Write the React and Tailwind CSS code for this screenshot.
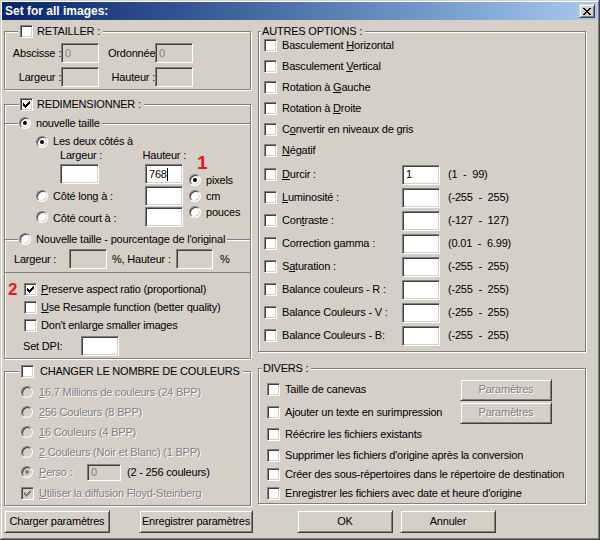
import React from "react";

const SUNKEN =
  "border border-t-[#808080] border-l-[#808080] border-b-white border-r-white shadow-[inset_1px_1px_0_#404040,inset_-1px_-1px_0_#d4d0c8]";
const RAISED =
  "border border-t-[#d4d0c8] border-l-[#d4d0c8] border-b-[#404040] border-r-[#404040] shadow-[inset_1px_1px_0_#fff,inset_-1px_-1px_0_#808080]";
const DIS = "text-[#808080] [text-shadow:1px_1px_0_#fff]";

const CHECK_COLS = [
  [1, 3],
  [2, 4],
  [3, 5],
  [4, 4],
  [5, 3],
  [6, 2],
  [7, 1],
];

function U({ children }) {
  return <u className="underline underline-offset-[1px]">{children}</u>;
}

function Check({ checked = false, disabled = false }) {
  return (
    <span
      className={`relative block w-[13px] h-[13px] shrink-0 ${
        disabled ? "bg-[#d4d0c8]" : "bg-white"
      } ${SUNKEN}`}
    >
      {checked && (
        <svg
          className="absolute left-0 top-0"
          width="11"
          height="11"
          viewBox="0 0 11 11"
          shapeRendering="crispEdges"
        >
          {CHECK_COLS.map(([x, y]) => (
            <rect
              key={x}
              x={x + 1}
              y={y + 1}
              width="1"
              height="3"
              fill={disabled ? "#808080" : "#000"}
            />
          ))}
        </svg>
      )}
    </span>
  );
}

function Radio({ checked = false, disabled = false }) {
  return (
    <span
      className={`relative block w-[12px] h-[12px] rounded-full shrink-0 ${
        disabled ? "bg-[#d4d0c8]" : "bg-white"
      } ${SUNKEN}`}
    >
      {checked && (
        <span
          className={`absolute left-[3px] top-[3px] w-[4px] h-[4px] rounded-full ${
            disabled ? "bg-[#808080]" : "bg-black"
          }`}
        />
      )}
    </span>
  );
}

function Field({ className = "", value = "", disabled = false, caret = false }) {
  return (
    <span
      className={`flex items-center h-[20px] shrink-0 pl-[3px] ${
        disabled ? "bg-[#d4d0c8] text-[#808080]" : "bg-white"
      } ${SUNKEN} ${className}`}
    >
      {value}
      {caret && <span className="w-px h-[13px] bg-black" />}
    </span>
  );
}

function Btn({ className = "", children, disabled = false }) {
  return (
    <span
      className={`flex items-center justify-center h-[23px] shrink-0 bg-[#d4d0c8] ${RAISED} ${
        disabled ? DIS : ""
      } ${className}`}
    >
      {children}
    </span>
  );
}

function Group({ legend, className = "", legendClass = "", children }) {
  return (
    <fieldset
      className={`m-0 p-0 min-w-0 border border-[#808080] shadow-[1px_1px_0_#fff,inset_1px_1px_0_#fff] ${className}`}
    >
      <legend className={`p-0 bg-[#d4d0c8] ${legendClass}`}>
        <span className="flex items-center h-[14px] whitespace-nowrap">{legend}</span>
      </legend>
      {children}
    </fieldset>
  );
}

function SubGroup({ legend, className = "", children }) {
  return (
    <fieldset
      className={`m-0 p-0 min-w-0 border-t border-[#808080] shadow-[inset_0_1px_0_#fff] ${className}`}
    >
      <legend className="p-0 ml-[13px] pl-[1px] pr-[2px] bg-[#d4d0c8]">
        <span className="flex items-center h-[14px] whitespace-nowrap">{legend}</span>
      </legend>
      {children}
    </fieldset>
  );
}

function CloseGlyph() {
  const px = [
    [0, 0], [1, 0], [6, 0], [7, 0],
    [1, 1], [2, 1], [5, 1], [6, 1],
    [2, 2], [3, 2], [4, 2], [5, 2],
    [3, 3], [4, 3],
    [2, 4], [3, 4], [4, 4], [5, 4],
    [1, 5], [2, 5], [5, 5], [6, 5],
    [0, 6], [1, 6], [6, 6], [7, 6],
  ];
  return (
    <svg width="8" height="7" viewBox="0 0 8 7" shapeRendering="crispEdges">
      {px.map(([x, y]) => (
        <rect key={`${x}-${y}`} x={x} y={y} width="1" height="1" fill="#000" />
      ))}
    </svg>
  );
}

function Left() {
  return (
    <div className="w-[247px] shrink-0 flex flex-col">
      {/* RETAILLER */}
      <Group
        className="mt-[4px]"
        legendClass="ml-[13px] pl-[2px] pr-[3px]"
        legend={
          <>
            <Check />
            <span className="ml-[4px]">RETAILLER :</span>
          </>
        }
      >
        <div className="mt-[5px] flex items-center h-[20px]">
          <span className="w-[56px] text-right">Abscisse :</span>
          <Field className="w-[38px]" value="0" disabled />
          <span className="w-[9px]" />
          <span className="w-[47px] overflow-hidden">Ordonnée :</span>
          <Field className="w-[38px]" value="0" disabled />
        </div>
        <div className="mt-[4px] mb-[2px] flex items-center h-[20px]">
          <span className="w-[56px] text-right">Largeur :</span>
          <Field className="w-[38px]" disabled />
          <span className="w-[56px] text-right">Hauteur :</span>
          <Field className="w-[38px]" disabled />
        </div>
      </Group>

      {/* REDIMENSIONNER */}
      <Group
        className="mt-[7px]"
        legendClass="ml-[14px] pl-[1px] pr-[3px]"
        legend={
          <>
            <Check checked />
            <span className="ml-[4px]">REDIMENSIONNER :</span>
          </>
        }
      >
        <SubGroup
          className="mt-[5px]"
          legend={
            <>
              <Radio checked />
              <span className="ml-[5px]">nouvelle taille</span>
            </>
          }
        >
          <div className="mt-[5px] h-[13px] flex items-center pl-[31px]">
            <Radio checked />
            <span className="ml-[5px]">Les deux côtés à</span>
          </div>
          <div className="flex">
            <div className="flex flex-col w-[181px]">
              <div className="h-[14px] flex items-center pl-[55px]">
                <span className="w-[85px]">Largeur :</span>
                <span>Hauteur :</span>
              </div>
              <div className="mt-[2px] h-[20px] flex items-center pl-[55px]">
                <Field className="w-[39px]" />
                <span className="w-[46px]" />
                <Field className="w-[38px]" value="768" caret />
              </div>
              <div className="mt-[2px] h-[20px] flex items-center pl-[31px]">
                <Radio />
                <span className="ml-[5px] w-[92px]">Côté long à :</span>
                <Field className="w-[38px]" />
              </div>
              <div className="mt-[1px] h-[20px] flex items-center pl-[31px]">
                <Radio />
                <span className="ml-[5px] w-[92px] translate-y-[1px]">Côté court à :</span>
                <Field className="w-[38px]" />
              </div>
            </div>
            <div className="flex flex-col">
              <div className="h-[24px] pl-[11px] flex items-end">
                <span className="text-[19px] leading-[19px] font-bold text-[#e8161c] tracking-normal">
                  1
                </span>
              </div>
              <div className="h-[16px] flex items-center pl-[3px]">
                <Radio checked />
                <span className="ml-[5px]">pixels</span>
              </div>
              <div className="h-[16px] flex items-center pl-[3px]">
                <Radio />
                <span className="ml-[5px]">cm</span>
              </div>
              <div className="h-[16px] flex items-center pl-[3px]">
                <Radio />
                <span className="ml-[5px]">pouces</span>
              </div>
            </div>
          </div>
        </SubGroup>

        <SubGroup
          className="mt-[5px] border-b pb-[3px]"
          legend={
            <>
              <Radio />
              <span className="ml-[5px]">Nouvelle taille - pourcentage de l'original</span>
            </>
          }
        >
          <div className="mt-[3px] h-[20px] flex items-center pl-[9px]">
            <span className="w-[55px]">Largeur :</span>
            <Field className="w-[38px]" disabled />
            <span className="ml-[5px] w-[64px]">%, Hauteur :</span>
            <Field className="w-[37px]" disabled />
            <span className="ml-[7px]">%</span>
          </div>
        </SubGroup>

        <div className="mt-[7px] flex flex-col">
          <div className="h-[18px] flex items-center pl-[3px]">
            <span className="w-[16px] text-[17px] leading-[17px] font-bold text-[#e8161c] tracking-normal">
              2
            </span>
            <Check checked />
            <span className="ml-[4px]">
              <U>P</U>reserve aspect ratio (proportional)
            </span>
          </div>
          <div className="h-[18px] flex items-center pl-[19px]">
            <Check />
            <span className="ml-[4px]">
              <U>U</U>se Resample function (better quality)
            </span>
          </div>
          <div className="h-[18px] flex items-center pl-[19px]">
            <Check />
            <span className="ml-[4px]">Don't enlarge smaller images</span>
          </div>
          <div className="mt-[2px] mb-[2px] h-[20px] flex items-center pl-[18px]">
            <span className="w-[58px]">Set DPI:</span>
            <Field className="w-[38px]" />
          </div>
        </div>
      </Group>

      {/* CHANGER */}
      <Group
        className="mt-[5px]"
        legendClass="ml-[14px] pl-[2px] pr-[3px]"
        legend={
          <>
            <Check />
            <span className="ml-[6px]">CHANGER LE NOMBRE DE COULEURS</span>
          </>
        }
      >
        <div className="mt-[4px] mb-[1px] flex flex-col pl-[16px]">
          {[
            [<U key="a">1</U>, "6,7 Millions de couleurs (24 BPP)"],
            [<U key="a">2</U>, "56 Couleurs (8 BPP)"],
            [<U key="a">1</U>, "6 Couleurs (4 BPP)"],
            [<U key="a">2</U>, " Couleurs (Noir et Blanc) (1 BPP)"],
          ].map(([a, b], i) => (
            <div key={i} className="h-[20px] flex items-center">
              <Radio disabled />
              <span className={`ml-[6px] whitespace-pre ${DIS}`}>
                {a}
                {b}
              </span>
            </div>
          ))}
          <div className="h-[20px] flex items-center">
            <Radio checked disabled />
            <span className={`ml-[6px] w-[48px] ${DIS}`}>
              <U>P</U>erso :
            </span>
            <Field className="w-[34px] !h-[17px]" value="0" disabled />
            <span className="ml-[6px]">(2 - 256 couleurs)</span>
          </div>
          <div className="h-[22px] flex items-center">
            <Check checked disabled />
            <span className={`ml-[5px] ${DIS}`}>
              <U>U</U>tiliser la diffusion Floyd-Steinberg
            </span>
          </div>
        </div>
      </Group>
    </div>
  );
}

function Right() {
  const simple = [
    <>Basculement <U>H</U>orizontal</>,
    <>Basculement <U>V</U>ertical</>,
    <>Rotation à <U>G</U>auche</>,
    <>Rotation à <U>D</U>roite</>,
    <>C<U>o</U>nvertir en niveaux de gris</>,
    <><U>N</U>égatif</>,
  ];
  const inputs = [
    [<><U>D</U>urcir :</>, "1", "(1  -  99)"],
    [<><U>L</U>uminosité :</>, "", "(-255  -  255)"],
    [<>Con<U>t</U>raste :</>, "", "(-127  -  127)"],
    ["Correction gamma :", "", "(0.01  -  6.99)"],
    [<>S<U>a</U>turation :</>, "", "(-255  -  255)"],
    ["Balance couleurs - R :", "", "(-255  -  255)"],
    ["Balance Couleurs - V :", "", "(-255  -  255)"],
    ["Balance Couleurs - B:", "", "(-255  -  255)"],
  ];
  const divers = [
    ["Taille de canevas", true, "h-[23px]"],
    ["Ajouter un texte en surimpression", true, "h-[23px]"],
    ["Réécrire les fichiers existants", false, "h-[21px]"],
    ["Supprimer les fichiers d'origine après la conversion", false, "h-[20px]"],
    ["Créer des sous-répertoires dans le répertoire de destination", false, "h-[19px]"],
    ["Enregistrer les fichiers avec date et heure d'origine", false, "h-[19px]"],
  ];
  return (
    <div className="w-[328px] shrink-0 flex flex-col">
      <Group
        className="mt-[4px]"
        legendClass="ml-[2px] pl-[1px] pr-[3px]"
        legend={<span>AUTRES OPTIONS :</span>}
      >
        <div className="mt-[-3px] flex flex-col pl-[5px]">
          {simple.map((l, i) => (
            <div key={i} className="h-[21px] flex items-center">
              <Check />
              <span className="ml-[5px]">{l}</span>
            </div>
          ))}
          <div className="h-[2px]" />
          {inputs.map(([l, v, r], i) => (
            <div key={i} className="h-[23px] flex items-center">
              <Check />
              <span className="ml-[5px] w-[120px]">{l}</span>
              <Field className="w-[38px]" value={v} />
              <span className="ml-[8px] whitespace-pre">{r}</span>
            </div>
          ))}
          <div className="h-[4px]" />
        </div>
      </Group>

      <Group
        className="mt-[9px]"
        legendClass="ml-[3px] pl-[1px] pr-[3px]"
        legend={<span>DIVERS :</span>}
      >
        <div className="mt-[3px] flex flex-col pl-[8px]">
          {divers.map(([l, btn, h], i) => (
            <div key={i} className={`${h} flex items-center`}>
              <Check />
              <span className="ml-[5px] flex-1">{l}</span>
              {btn && (
                <Btn className="w-[92px] !h-[22px] mr-[33px]" disabled>
                  Paramètres
                </Btn>
              )}
            </div>
          ))}
        </div>
      </Group>
    </div>
  );
}

export default function App() {
  return (
    <div className="w-[600px] h-[540px] overflow-hidden whitespace-nowrap bg-[#d4d0c8] p-[2px] shadow-[inset_-1px_-1px_0_#404040,inset_1px_1px_0_#d4d0c8,inset_-2px_-2px_0_#808080,inset_2px_2px_0_#fff] font-['Liberation_Sans',Arial,sans-serif] text-[11px] leading-[13px] tracking-[-0.2px] text-black">
      <div className="h-[18px] flex items-center justify-between pl-[3px] pr-[3px] bg-linear-to-r from-[#0a246a] to-[#a6caf0]">
        <span className="text-white font-bold text-[12px] tracking-normal">Set for all images:</span>
        <span className={`flex items-center justify-center w-[16px] h-[14px] bg-[#d4d0c8] ${RAISED}`}>
          <CloseGlyph />
        </span>
      </div>
      <div className="h-[486px] flex px-[2px] gap-[7px]">
        <Left />
        <Right />
      </div>
      <div className="mt-[4px] flex pl-[2px]">
        <Btn className="w-[106px]">Charger paramètres</Btn>
        <Btn className="w-[114px] ml-[29px]">Enregistrer paramètres</Btn>
        <Btn className="w-[96px] ml-[44px]">OK</Btn>
        <Btn className="w-[96px] ml-[7px]">Annuler</Btn>
      </div>
    </div>
  );
}
